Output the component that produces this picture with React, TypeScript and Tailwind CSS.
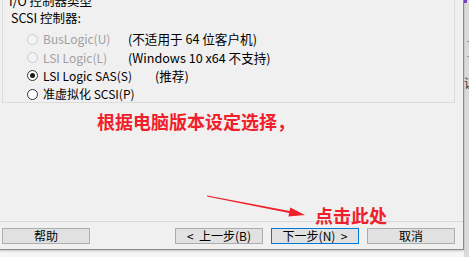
import type { ReactNode } from 'react';

type RadioState = 'disabled' | 'off' | 'on';

const Radio = ({ state }: { state: RadioState }) => {
  if (state === 'disabled') {
    return <span className="h-[11px] w-[11px] shrink-0 rounded-full border border-[#cccccc] bg-[#f3f3f3]" />;
  }
  return (
    <span className="flex h-[11px] w-[11px] shrink-0 items-center justify-center rounded-full border border-[#333333] bg-white">
      {state === 'on' && <span className="h-[5px] w-[5px] rounded-full bg-[#1a1a1a]" />}
    </span>
  );
};

const Option = ({
  state,
  label,
  note,
  noteClass = '',
}: {
  state: RadioState;
  label: string;
  note?: string;
  noteClass?: string;
}) => (
  <div className="ml-[16px] flex h-[18.4px] items-center">
    <Radio state={state} />
    <span className={`ml-[5px] w-[85px] whitespace-nowrap ${state === 'disabled' ? 'text-[#a0a0a0]' : ''}`}>{label}</span>
    {note && <span className={`whitespace-nowrap text-[12.6px] ${noteClass}`}>{note}</span>}
  </div>
);

const Button = ({ children, primary = false }: { children: ReactNode; primary?: boolean }) => (
  <button
    className={`flex h-[16px] w-[88px] items-center justify-center whitespace-pre border bg-[#e1e1e1] text-[12px] leading-[14px] ${
      primary ? 'border-[#0078d7]' : 'border-[#adadad]'
    }`}
  >
    {children}
  </button>
);

export default function App() {
  return (
    <div className="flex h-[257px] w-[469px] overflow-hidden bg-[#f5f5f5] font-['Noto_Sans_CJK_SC',sans-serif] text-[12px] text-black">
      <div className="relative flex h-[250px] w-[464px] shrink-0 flex-col border-r border-b border-[#8c8c8c] bg-[#f0f0f0] shadow-[0_1px_2px_rgba(0,0,0,0.2)]">
        {/* group box */}
        <div className="relative ml-[2px] mt-[-7px] h-[110px] w-[453px] shrink-0 border border-[#dcdcdc]">
          <span className="absolute left-[5px] top-0 bg-[#f0f0f0] px-[1px] text-[12.5px] leading-[14px]">I/O 控制器类型</span>
          <div className="pl-[8px] pt-[15px] leading-[18px]">
            <p className="mb-[3px] text-[12.5px]">SCSI 控制器:</p>
            <Option state="disabled" label="BusLogic(U)" note="(不适用于 64 位客户机)" />
            <Option state="disabled" label="LSI Logic(L)" note="(Windows 10 x64 不支持)" />
            <Option state="on" label="LSI Logic SAS(S)" note="(推荐)" noteClass="ml-[27px]" />
            <Option state="off" label="准虚拟化 SCSI(P)" />
          </div>
        </div>

        <p className="mt-[8px] pl-[97px] text-[18px] font-bold leading-[20px] text-[#f0202a]">根据电脑版本设定选择，</p>

        <div className="flex-1" />

        <div className="flex items-center border-t border-[#d9d9d9] pb-[5px] pl-[2px] pr-[8px] pt-[6px]">
          <Button>帮助</Button>
          <div className="ml-auto flex gap-[8px]">
            <Button>{'<  上一步(B)'}</Button>
            <Button primary>{'下一步(N)  >'}</Button>
            <Button>取消</Button>
          </div>
        </div>

        {/* annotation */}
        <svg className="pointer-events-none absolute left-0 top-0" width="463" height="249" viewBox="0 0 463 249">
          <polygon
            fill="#f0202a"
            points="206.9,196.6 289.1,213.0 288.4,216.4 305,215 290.2,207.5 289.5,210.9 207.1,195.4"
          />
        </svg>
        <span className="absolute left-[315px] top-[205px] text-[18px] font-bold leading-[20px] text-[#f0202a]">点击此处</span>
      </div>

      <div className="flex flex-1 flex-col bg-[#dadada] text-[#555555]">
        <span className="h-[3px] w-[3px] bg-[#7b3fc4]" />
        <span className="mt-[34px] pl-[3px] text-[9px] leading-[10px]">+</span>
        <span className="mt-[5px] pl-[3px] text-[9px] leading-[10px]">+</span>
        <span className="mt-[14px] text-[12px] leading-[14px] text-[#333333]">证</span>
      </div>
    </div>
  );
}
